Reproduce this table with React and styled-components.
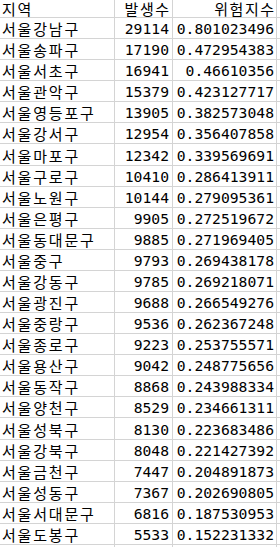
import React from "react";
import styled, { createGlobalStyle } from "styled-components";

const GlobalStyle = createGlobalStyle`
  html, body { margin: 0; padding: 0; background: #ffffff; }
  body { overflow: hidden; }
`;

const data = [
  ["서울강남구", "29114", "0.801023496"],
  ["서울송파구", "17190", "0.472954383"],
  ["서울서초구", "16941", "0.46610356"],
  ["서울관악구", "15379", "0.423127717"],
  ["서울영등포구", "13905", "0.382573048"],
  ["서울강서구", "12954", "0.356407858"],
  ["서울마포구", "12342", "0.339569691"],
  ["서울구로구", "10410", "0.286413911"],
  ["서울노원구", "10144", "0.279095361"],
  ["서울은평구", "9905", "0.272519672"],
  ["서울동대문구", "9885", "0.271969405"],
  ["서울중구", "9793", "0.269438178"],
  ["서울강동구", "9785", "0.269218071"],
  ["서울광진구", "9688", "0.266549276"],
  ["서울중랑구", "9536", "0.262367248"],
  ["서울종로구", "9223", "0.253755571"],
  ["서울용산구", "9042", "0.248775656"],
  ["서울동작구", "8868", "0.243988334"],
  ["서울양천구", "8529", "0.234661311"],
  ["서울성북구", "8130", "0.223683486"],
  ["서울강북구", "8048", "0.221427392"],
  ["서울금천구", "7447", "0.204891873"],
  ["서울성동구", "7367", "0.202690805"],
  ["서울서대문구", "6816", "0.187530953"],
  ["서울도봉구", "5533", "0.152231332"],
];

const Sheet = styled.div`
  display: grid;
  grid-template-columns: 115px 58px 104px 1fr;
  width: 280px;
  height: 547px;
  overflow: hidden;
  align-content: start;
`;

const Cell = styled.div`
  box-sizing: border-box;
  height: ${(p) => (p.$header ? "18px" : "21.08px")};
  border-bottom: 1px solid #d4d4d4;
  border-right: ${(p) => (p.$last ? "none" : "1px solid #d4d4d4")};
  display: flex;
  align-items: flex-end;
  justify-content: ${(p) => (p.$align === "left" ? "flex-start" : "flex-end")};
  padding-bottom: ${(p) => (p.$header ? "1px" : "2px")};
  padding-left: ${(p) => (p.$align === "left" ? "2px" : "0")};
  padding-right: ${(p) => (p.$align === "left" ? "0" : p.$narrow ? "3px" : "2px")};
  color: #000000;
  white-space: nowrap;
`;

const KText = styled.span`
  font-family: "Noto Sans CJK KR", sans-serif;
  font-size: 15px;
  letter-spacing: ${(p) => (p.$tight ? "1.5px" : "1.8px")};
  margin-right: ${(p) => (p.$tight ? "-1.5px" : "0")};
  line-height: 15px;
  display: block;
`;

const NumText = styled.span`
  font-family: "DejaVu Sans Mono", "Liberation Mono", monospace;
  font-size: 14.7px;
  line-height: 15px;
  display: block;
`;

export default function App() {
  return (
    <>
      <GlobalStyle />
      <Sheet>
        <Cell $header $align="left">
          <KText>지역</KText>
        </Cell>
        <Cell $header $narrow>
          <KText $tight>발생수</KText>
        </Cell>
        <Cell $header>
          <KText $tight>위험지수</KText>
        </Cell>
        <Cell $header $last />
        {data.map(([name, count, idx]) => (
          <React.Fragment key={name}>
            <Cell $align="left">
              <KText>{name}</KText>
            </Cell>
            <Cell $narrow>
              <NumText>{count}</NumText>
            </Cell>
            <Cell>
              <NumText>{idx}</NumText>
            </Cell>
            <Cell $last />
          </React.Fragment>
        ))}
        <Cell $align="left" />
        <Cell $narrow />
        <Cell />
        <Cell $last />
      </Sheet>
    </>
  );
}
